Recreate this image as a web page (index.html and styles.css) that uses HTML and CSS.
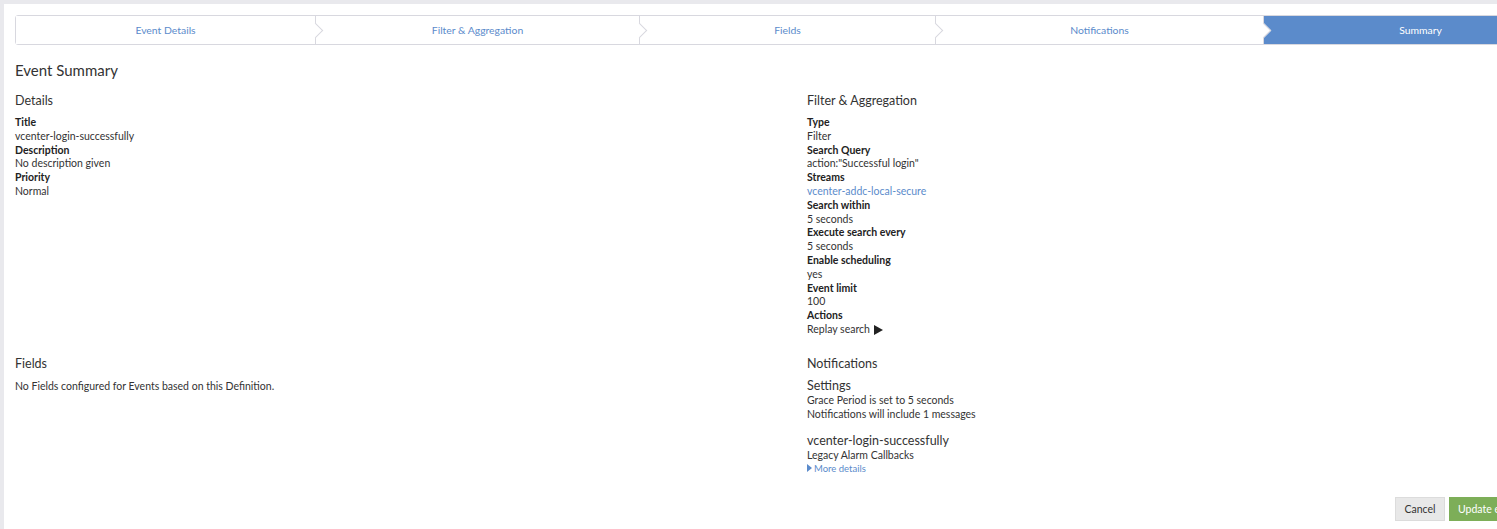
FILE: index.html
```html
<!DOCTYPE html>
<html>
<head>
<meta charset="utf-8">
<link rel="stylesheet" href="styles.css">
</head>
<body>
<div class="page">
  <div class="wizard">
    <div class="step">Event Details</div>
    <div class="step">Filter &amp; Aggregation</div>
    <div class="step">Fields</div>
    <div class="step">Notifications</div>
    <div class="step active">Summary</div>
  </div>

  <h1 class="title">Event Summary</h1>

  <div class="grid">
    <section class="col">
      <h2 class="sec">Details</h2>
      <dl class="dl">
        <dt>Title</dt><dd>vcenter-login-successfully</dd>
        <dt>Description</dt><dd>No description given</dd>
        <dt>Priority</dt><dd>Normal</dd>
      </dl>
    </section>
    <section class="col">
      <h2 class="sec">Filter &amp; Aggregation</h2>
      <dl class="dl">
        <dt>Type</dt><dd>Filter</dd>
        <dt>Search Query</dt><dd>action:"Successful login"</dd>
        <dt>Streams</dt><dd><a class="link">vcenter-addc-local-secure</a></dd>
        <dt>Search within</dt><dd>5 seconds</dd>
        <dt>Execute search every</dt><dd>5 seconds</dd>
        <dt>Enable scheduling</dt><dd>yes</dd>
        <dt>Event limit</dt><dd>100</dd>
        <dt>Actions</dt><dd class="replay">Replay search <svg class="play" width="9" height="10" viewBox="0 0 9 10"><path d="M0 0 L9 5 L0 10 Z" fill="#222"/></svg></dd>
      </dl>
    </section>
    <section class="col row2">
      <h2 class="sec">Fields</h2>
      <p class="txt">No Fields configured for Events based on this Definition.</p>
    </section>
    <section class="col row2">
      <h2 class="sec">Notifications</h2>
      <h3 class="sub">Settings</h3>
      <p class="txt">Grace Period is set to 5 seconds</p>
      <p class="txt">Notifications will include 1 messages</p>
      <h3 class="sub sub2">vcenter-login-successfully</h3>
      <p class="txt">Legacy Alarm Callbacks</p>
      <a class="more"><svg width="5" height="8" viewBox="0 0 5 8"><path d="M0 0 L5 4 L0 8 Z" fill="#5b8bcb"/></svg> More details</a>
    </section>
  </div>

  <div class="actions">
    <button class="btn cancel">Cancel</button>
    <button class="btn primary">Update event definition</button>
  </div>
</div>
</body>
</html>
```
FILE: styles.css
```css
html, body {
  margin: 0;
  padding: 0;
}
body {
  background: #e9e9ed;
  overflow: hidden;
  width: 1497px;
  height: 529px;
  font-family: Lato, "Open Sans", sans-serif;
  color: #333;
}
.page {
  margin: 4px 0 0 4px;
  background: #fff;
  width: 1585px;
  height: 540px;
  padding: 11px 11px 0 11px;
  box-sizing: border-box;
}
.wizard {
  display: grid;
  grid-template-columns: 300px 324px 296px 328px 1fr;
  height: 30px;
  border: 1px solid #d8d8df;
  border-radius: 3px;
  box-sizing: border-box;
  width: 1563px;
}
.step {
  position: relative;
  display: flex;
  align-items: center;
  justify-content: center;
  font-size: 10.4px;
  color: #5b8bcb;
  border-right: 1px solid #d8d8df;
  background: #fff;
}
.step::after {
  content: "";
  position: absolute;
  right: -6px;
  top: 50%;
  width: 10px;
  height: 10px;
  margin-top: -5px;
  background: #fff;
  border-top: 1px solid #d8d8df;
  border-right: 1px solid #d8d8df;
  transform: rotate(45deg);
  z-index: 2;
}
.step.active {
  background: #5b8bcb;
  color: #fff;
  border-right: none;
}
.step.active::after {
  display: none;
}
.title {
  margin: 16px 0 0 0;
  font-size: 15px;
  line-height: 18px;
  font-weight: 400;
  color: #333;
}
.grid {
  display: grid;
  grid-template-columns: 792px 1fr;
  margin-top: 14px;
}
.sec {
  margin: 0;
  font-size: 12.5px;
  line-height: 16px;
  font-weight: 400;
  color: #333;
}
.dl {
  margin: 7px 0 0 0;
  font-size: 10.5px;
  line-height: 13.8px;
}
.dl dt {
  font-weight: 700;
  color: #222;
}
.dl dd {
  margin: 0;
}
.link {
  color: #5b8bcb;
}
.replay {
  display: flex;
  align-items: center;
  gap: 4px;
}
.row2 {
  margin-top: 19px;
}
.txt {
  margin: 0;
  font-size: 10.5px;
  line-height: 14px;
}
.row2 .sec + .txt {
  margin-top: 7px;
}
.sub {
  margin: 6px 0 0 0;
  font-size: 12.5px;
  line-height: 15px;
  font-weight: 400;
}
.sub2 {
  margin-top: 12px;
}
.more {
  display: flex;
  align-items: center;
  gap: 2px;
  margin-top: 0;
  font-size: 9.5px;
  line-height: 13px;
  color: #5b8bcb;
}
.actions {
  display: flex;
  justify-content: flex-end;
  gap: 4px;
  margin-top: 22px;
  width: 1561px;
}
.btn {
  height: 24px;
  padding: 0 8px;
  font-family: Lato, "Open Sans", sans-serif;
  font-size: 10.5px;
  border-radius: 0;
}
.cancel {
  background: #e8e8e8;
  border: 1px solid #dcdcdc;
  color: #333;
  width: 50px;
}
.primary {
  background: #7dae58;
  border: 1px solid #7dae58;
  color: #fff;
}
```
